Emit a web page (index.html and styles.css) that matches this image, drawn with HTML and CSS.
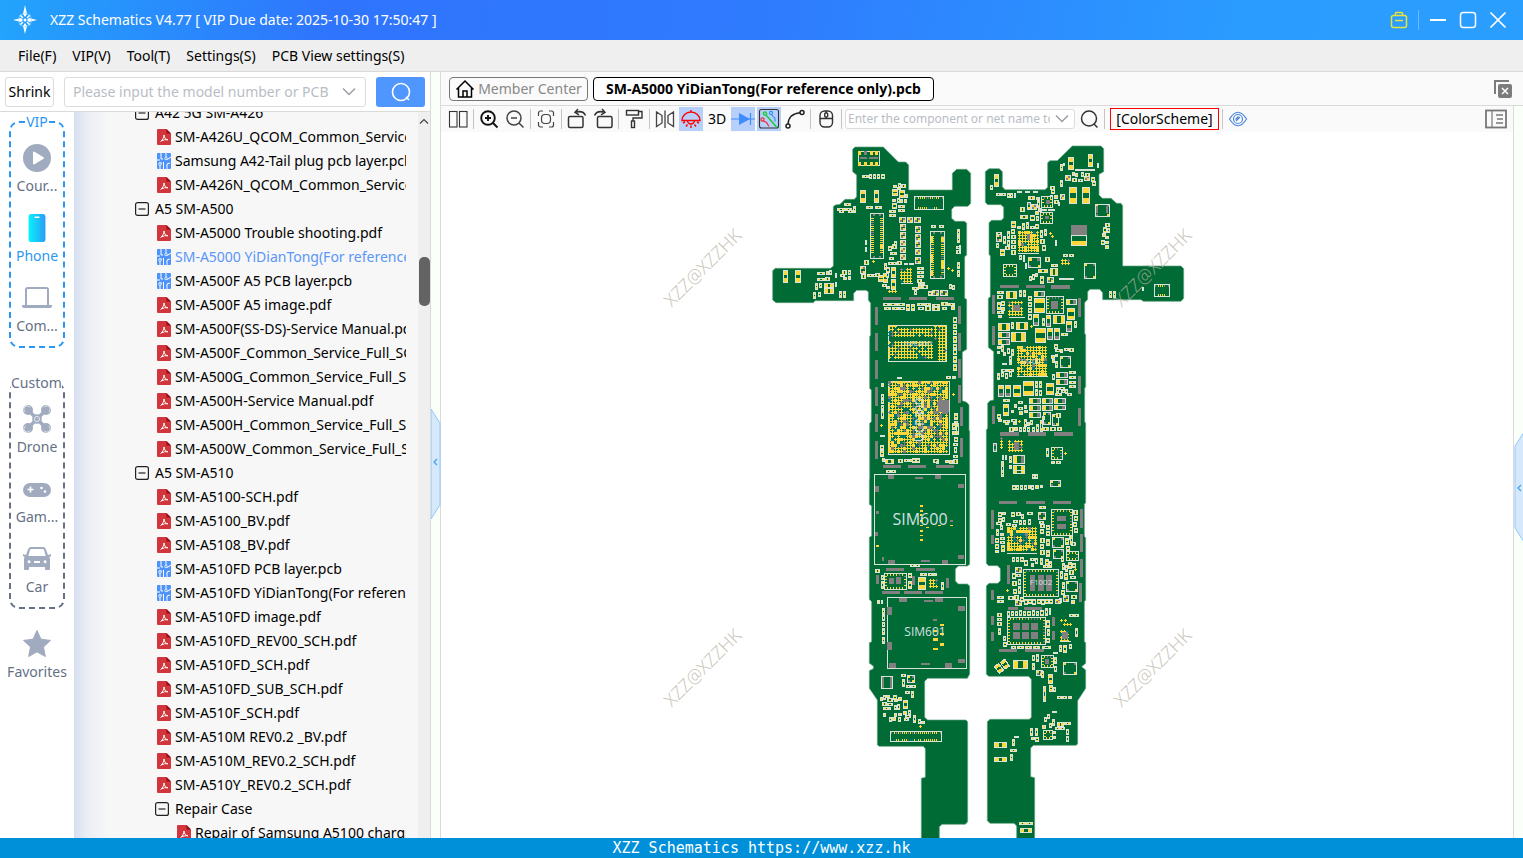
FILE: index.html
```html
<!DOCTYPE html>
<html lang="en">
<head>
<meta charset="utf-8">
<title>XZZ Schematics</title>
<link rel="stylesheet" href="styles.css">
</head>
<body>
<div class="app">
  <header class="titlebar">
    <svg class="logo" width="26" height="30" viewBox="0 0 26 30"><path d="M13 0l2 9-2 3-2-3zM13 29l2-8-2-3-2 3zM1 15l8-2 2 2-2 2zM25 15l-8-2-2 2 2 2z" fill="#fff"/><path d="M8 10l3 3M18 10l-3 3M8 20l3-3M18 20l-3-3" stroke="#fff" stroke-width="1.5"/><circle cx="13" cy="15" r="6.500" fill="none" stroke="#9cdcff" stroke-width="1" opacity=".7"/><circle cx="13" cy="15" r="1.500" fill="#fff"/></svg>
    <h1 class="title">XZZ Schematics V4.77 [ VIP Due date: 2025-10-30 17:50:47 ]</h1>
    <div class="window-controls">
      <button class="wc" aria-label="Toolbox"><svg width="18" height="18" viewBox="0 0 18 18" fill="none" stroke="#e8e337" stroke-width="1.500"><rect x="1.500" y="4.500" width="15" height="12" rx="2"/><path d="M5.500 4.500v-2a1 1 0 0 1 1-1h5a1 1 0 0 1 1 1v2M5 9.500h8"/></svg></button>
      <span class="wc-sep"></span>
      <button class="wc" aria-label="Minimize"><svg width="18" height="18" viewBox="0 0 18 18"><path d="M1 9h16" stroke="#fff" stroke-width="2"/></svg></button>
      <button class="wc" aria-label="Maximize"><svg width="18" height="18" viewBox="0 0 18 18"><rect x="1.500" y="1.500" width="15" height="15" rx="3" fill="none" stroke="#fff" stroke-width="1.500"/></svg></button>
      <button class="wc" aria-label="Close"><svg width="18" height="18" viewBox="0 0 18 18"><path d="M1.500 1.500l15 15M16.500 1.500l-15 15" stroke="#fff" stroke-width="1.700"/></svg></button>
    </div>
  </header>
  <nav class="menubar">
    <button>File(F)</button><button>VIP(V)</button><button>Tool(T)</button><button>Settings(S)</button><button>PCB View settings(S)</button>
  </nav>
  <main class="main">
    <section class="left">
      <form class="search-row">
        <button type="button" class="shrink">Shrink</button>
        <div class="combo">
          <input type="text" aria-label="Model number" placeholder="Please input the model number or PCB">
          <button type="button" class="chev" aria-label="Show history"><svg width="14" height="10" viewBox="0 0 14 10"><path d="M1 1.500l6 6 6-6" fill="none" stroke="#9a9da4" stroke-width="1.500"/></svg></button>
        </div>
        <button type="button" class="go" aria-label="Search"><svg width="22" height="22" viewBox="0 0 22 22" fill="none" stroke="#fff" stroke-width="1.600"><circle cx="11" cy="11" r="8.500"/><path d="M16 16l3 3"/></svg></button>
      </form>
      <div class="left-body">
        <aside class="side">
          <fieldset class="group vip">
            <legend>VIP</legend>
            <button class="cat"><svg width="30" height="30" viewBox="0 0 30 30"><circle cx="15" cy="15" r="14" fill="#a1abbf"/><path d="M11 9.500v11a1 1 0 0 0 1.500.8l9-5.500a1 1 0 0 0 0-1.600l-9-5.500a1 1 0 0 0-1.500.8z" fill="#fff"/></svg><span>Cour...</span></button>
            <button class="cat on"><svg width="30" height="32" viewBox="0 0 30 32"><defs><linearGradient id="ph"><stop offset="0" stop-color="#08f2fa"/><stop offset="1" stop-color="#2b9cf6"/></linearGradient></defs><rect x="6" y="1" width="18" height="30" rx="3" fill="url(#ph)"/><path d="M13 4.500h4" stroke="#fff" stroke-width="1.600" stroke-linecap="round"/></svg><span>Phone</span></button>
            <button class="cat"><svg width="30" height="30" viewBox="0 0 30 30"><path d="M4 22V6.500A1.500 1.500 0 0 1 5.500 5h19A1.500 1.500 0 0 1 26 6.500V22" fill="none" stroke="#a1abbf" stroke-width="2"/><path d="M0 22h30v1a2 2 0 0 1-2 2H2a2 2 0 0 1-2-2z" fill="#a1abbf"/></svg><span>Com...</span></button>
          </fieldset>
          <fieldset class="group custom">
            <legend>Custom</legend>
            <button class="cat"><svg width="30" height="30" viewBox="0 0 30 30"><path d="M6 6l18 18M24 6L6 24" stroke="#a1abbf" stroke-width="3.500"/><g fill="#a1abbf"><circle cx="6" cy="6" r="5"/><circle cx="24" cy="6" r="5"/><circle cx="6" cy="24" r="5"/><circle cx="24" cy="24" r="5"/><circle cx="15" cy="15" r="4.800"/></g><g fill="none" stroke="#eef0f4" stroke-width=".9"><path d="M3.500 8A3.300 3.300 0 1 1 8 3.500M22 3.500A3.300 3.300 0 1 1 26.500 8M3.500 22A3.300 3.300 0 1 0 8 26.500M22 26.500A3.300 3.300 0 1 0 26.500 22"/><circle cx="15" cy="15" r="2.500"/></g></svg><span>Drone</span></button>
            <button class="cat"><svg width="30" height="30" viewBox="0 0 30 30"><rect x="1" y="9" width="28" height="14" rx="7" fill="#a1abbf"/><path d="M5.500 15.500h6M8.500 12.500v6" stroke="#fff" stroke-width="1.600"/><circle cx="19.500" cy="14" r="1.300" fill="#fff"/><circle cx="23" cy="17.500" r="1.300" fill="#fff"/></svg><span>Gam...</span></button>
            <button class="cat"><svg width="30" height="30" viewBox="0 0 30 30"><path fill-rule="evenodd" fill="#a1abbf" d="M9 3h12a3 3 0 0 1 2.800 2L26 11l3-1v2l-1.500 1 .5 2v10a1 1 0 0 1-1 1h-3a1 1 0 0 1-1-1v-2H7v2a1 1 0 0 1-1 1H3a1 1 0 0 1-1-1V15l.5-2L1 12v-2l3 1 2.200-6A3 3 0 0 1 9 3zm0 2a1 1 0 0 0-1 .7L6.300 12h17.400L22 5.700A1 1 0 0 0 21 5zM7 16.300a1.500 1.500 0 1 0 .1 3 1.500 1.500 0 0 0-.1-3zm16 0a1.500 1.500 0 1 0 .1 3 1.500 1.500 0 0 0-.1-3zM12 17v2h6v-2z"/></svg><span>Car</span></button>
          </fieldset>
          <button class="cat fav"><svg width="30" height="30" viewBox="0 0 30 30"><path d="M15 1.500l4 8.700 9.500 1.200-7 6.500 1.800 9.600-8.300-4.700-8.300 4.700 1.800-9.600-7-6.500 9.500-1.200z" fill="#a1abbf" stroke="#a1abbf" stroke-width="1" stroke-linejoin="round"/></svg><span>Favorites</span></button>
        </aside>
        <div class="tree-pane"><ul class="tree" id="tree"></ul></div>
        <div class="scrollbar"><svg width="10" height="6" viewBox="0 0 10 6"><path d="M1 5.500l4-4 4 4" fill="none" stroke="#444" stroke-width="1.200"/></svg><span class="thumb"></span></div>
      </div>
    </section>
    <div class="splitter"><svg width="10" height="112" viewBox="0 0 10 112"><path d="M0 1l9 14v82l-9 14z" fill="#d6e9fc" stroke="#93c8f6"/><path d="M6 51l-3 3 3 3" fill="none" stroke="#45a5ea" stroke-width="1.300"/></svg></div>
    <section class="right">
      <div class="tabs">
        <button class="tab home"><svg width="20" height="20" viewBox="0 0 20 20" fill="none" stroke="#000" stroke-width="1.500"><path d="M1.500 10.500L10 2l8.500 8.500M3.500 9v9h13V9M8 18v-6h4v6"/></svg><span>Member Center</span></button>
        <button class="tab current">SM-A5000 YiDianTong(For reference only).pcb</button>
        <button class="plain close-all" aria-label="Close all"><svg width="20" height="20" viewBox="0 0 20 20"><path d="M2 15V2h14" fill="none" stroke="#7c7c7c" stroke-width="2"/><rect x="5" y="5" width="14" height="14" rx="2" fill="#7c7c7c"/><path d="M9 9l6 6M15 9l-6 6" stroke="#fff" stroke-width="1.500"/></svg></button>
      </div>
      <div class="view">
        <div class="view-main">
          <div class="toolbar" role="toolbar">
            <button class="tb" aria-label="Split"><svg width="22" height="22" viewBox="0 0 22 22" fill="none" stroke="#333" stroke-width="1.100"><rect x="2.500" y="3.500" width="7.500" height="15.500"/><rect x="12.500" y="3.500" width="7.500" height="15.500"/></svg></button>
            <i class="sep"></i>
            <button class="tb" aria-label="Zoom in"><svg width="22" height="22" viewBox="0 0 22 22" fill="none" stroke="#111" stroke-width="1.900"><circle cx="10" cy="10" r="6.800"/><path d="M15 15l4.500 4.500M7 10h6M10 7v6"/></svg></button>
            <button class="tb" aria-label="Zoom out"><svg width="22" height="22" viewBox="0 0 22 22" fill="none" stroke="#444" stroke-width="1.500"><circle cx="10" cy="10" r="7"/><path d="M15 15l4.500 4.500M7 10h6"/></svg></button>
            <i class="sep"></i>
            <button class="tb" aria-label="Fit"><svg width="22" height="22" viewBox="0 0 22 22" fill="none" stroke="#444" stroke-width="1.200"><path d="M3.500 8V5a2 2 0 0 1 2-2H8M14 3h2.500a2 2 0 0 1 2 2v3M18.500 14v3a2 2 0 0 1-2 2H14M8 19H5.500a2 2 0 0 1-2-2v-3"/><rect x="6.500" y="6.500" width="9" height="9" rx="3.500"/></svg></button>
            <i class="sep"></i>
            <button class="tb" aria-label="Rotate left"><svg width="22" height="22" viewBox="0 0 22 22" fill="none" stroke="#333" stroke-width="1.500"><rect x="2.500" y="8.500" width="14.500" height="11" rx="1.500"/><path d="M19.500 7.500C18 4 14 3 9.500 4.200M12 1L9 4.300l4 2.500"/></svg></button>
            <button class="tb" aria-label="Rotate right"><svg width="22" height="22" viewBox="0 0 22 22" fill="none" stroke="#333" stroke-width="1.500"><rect x="5.500" y="8.500" width="14.500" height="11" rx="1.500"/><path d="M2.500 7.500C4 4 8 3 12.500 4.200M10 1l3 3.300-4 2.500"/></svg></button>
            <i class="sep"></i>
            <button class="tb" aria-label="Paint"><svg width="22" height="22" viewBox="0 0 22 22" fill="none" stroke="#333" stroke-width="1.400"><rect x="3.500" y="2.500" width="12" height="4.500"/><path d="M15.500 3.500H19V10h-9v3"/><rect x="8.500" y="13" width="3" height="6.500"/></svg></button>
            <i class="sep"></i>
            <button class="tb" aria-label="Mirror"><svg width="22" height="22" viewBox="0 0 22 22" fill="none" stroke="#444" stroke-width="1.300"><path d="M2.500 4v14.500L8 15V7.500zM19.500 4v14.500L14 15V7.500zM11 2.500V20"/></svg></button>
            <button class="tb hl" aria-label="Lamp"><svg width="22" height="22" viewBox="0 0 22 22" fill="none" stroke="#f00" stroke-width="1.400"><path d="M2 12.500a9 8.500 0 0 1 18 0zM11 4V2M7.500 12.500a3.500 3.500 0 0 0 7 0M3 15l2-1M19 15l-2-1M6 18.500l1.500-2M16 18.500l-1.500-2M11 20v-2.500"/></svg></button>
            <button class="tb">3D</button>
            <button class="tb hl" aria-label="Diode"><svg width="24" height="22" viewBox="0 0 24 22"><path d="M0 11h24M19.500 5v12" stroke="#3f8cff" stroke-width="1.200"/><path d="M8 5l11 6-11 6z" fill="#3f8cff"/></svg></button>
            <button class="tb hl" aria-label="Traces"><svg width="22" height="22" viewBox="0 0 22 22" fill="none" stroke-width="1.400"><rect x="1.500" y="1.500" width="19" height="18.500" rx="2" stroke="#333" stroke-width="1.100"/><path d="M8 7l11 12.500" stroke="#19c832"/><circle cx="7" cy="5.500" r="1.600" stroke="#19c832"/><path d="M13.500 6.500l3.500 4v3" stroke="#2a8cf4" stroke-width="1.100"/><circle cx="13" cy="5" r="1.600" stroke="#2a8cf4" stroke-width="1.100"/><path d="M5.500 13l3 1.500 2.500 4" stroke="#f02b2b" stroke-width="1.200"/><circle cx="4.500" cy="11.500" r="1.600" stroke="#f02b2b" stroke-width="1.200"/></svg></button>
            <button class="tb" aria-label="Curve"><svg width="22" height="22" viewBox="0 0 22 22" fill="none" stroke="#222" stroke-width="1.500"><circle cx="4" cy="18" r="2"/><circle cx="18" cy="4.500" r="2"/><path d="M4 16C4.500 9 9 5.500 16 4.800"/></svg></button>
            <i class="sep"></i>
            <button class="tb" aria-label="Mouse"><svg width="22" height="22" viewBox="0 0 22 22" fill="none" stroke="#333" stroke-width="1.400"><rect x="5" y="3" width="12.500" height="16" rx="4.500"/><path d="M5 10.500h12.500M11.200 3v2M11.200 9v1.500"/><rect x="9.700" y="5" width="3" height="4" rx="1"/></svg></button>
            <i class="sep"></i>
            <div class="combo small">
              <input type="text" aria-label="Component or net name" placeholder="Enter the component or net name to">
              <button type="button" class="chev" aria-label="Show history"><svg width="14" height="10" viewBox="0 0 14 10"><path d="M1 1.500l6 6 6-6" fill="none" stroke="#9a9da4" stroke-width="1.500"/></svg></button>
            </div>
            <button class="tb" aria-label="Find"><svg width="22" height="22" viewBox="0 0 22 22" fill="none" stroke="#333" stroke-width="1.500"><circle cx="11" cy="10.500" r="7.500"/><path d="M16 16l3.500 3.500"/></svg></button>
            <i class="sep"></i>
            <button class="scheme">[ColorScheme]</button>
            <i class="sep"></i>
            <button class="tb" aria-label="Visibility"><svg width="22" height="22" viewBox="0 0 22 22" fill="none" stroke="#4a86dd" stroke-width="1.200"><path d="M2.500 11Q11-2.500 19.500 11 11 24.500 2.500 11z"/><circle cx="11" cy="11" r="4.500"/><path d="M9 13l4-4M8.500 11.500l3-3"/></svg></button>
            <button class="plain panel-toggle" aria-label="Panel"><svg width="22" height="20" viewBox="0 0 22 20" fill="none" stroke="#777"><rect x="1" y="1.500" width="20" height="17" stroke-width="1.800"/><path d="M7 1v18" stroke-width="1.200"/><path d="M11 6h7M12 10h6M11 14h7" stroke-width="1.500"/></svg></button>
          </div>
          <div class="canvas"><svg id="board" viewBox="441 132 1072 706" preserveAspectRatio="xMidYMin meet"></svg></div>
        </div>
        <div class="edge"><svg width="10" height="112" viewBox="0 0 10 112"><path d="M10 1L1 15v82l9 14z" fill="#d6e9fc" stroke="#93c8f6"/><path d="M7 54l-3 3 3 3" fill="none" stroke="#45a5ea" stroke-width="1.300"/></svg></div>
      </div>
    </section>
  </main>
  <footer class="status">XZZ Schematics https://www.xzz.hk</footer>
</div>
<script src="app.js"></script>
</body>
</html>
```
FILE: styles.css
```css
* { box-sizing: border-box; }
body { margin: 0; font-family: "Noto Sans", "Open Sans", sans-serif; font-size: 14px; line-height: 20px; color: #000; }
button, input { font: inherit; color: inherit; margin: 0; padding: 0; border: 0; background: none; }
button { cursor: pointer; white-space: nowrap; }
svg { display: block; }
.app { display: flex; flex-direction: column; height: 100vh; overflow: hidden; background: #fff; }

.titlebar { flex: none; height: 40px; display: flex; align-items: center; padding: 0 16px 0 12px; background: linear-gradient(100deg, #22a4fc 0, #2f74fd 22%, #2f7bfe 50%, #2a9cff 82%, #2a9eff 100%); color: #fff; }
.title { margin: 0 auto 0 12px; font-size: 14px; font-weight: 400; }
.window-controls { display: flex; align-items: center; gap: 12px; }
.wc-sep { width: 1px; height: 20px; margin: 0 -2px; background: #6fbaff; }

.menubar { flex: none; height: 32px; display: flex; align-items: center; gap: 16px; padding: 1px 18px 0; background: #efefef; border-bottom: 1px solid #d9d9d9; }

.main { flex: 1; min-height: 0; display: flex; }
.left { flex: none; width: 431px; display: flex; flex-direction: column; border-right: 1px solid #dadada; }
.search-row { flex: none; height: 40px; display: flex; align-items: center; padding: 0 5px; gap: 10px; border-bottom: 1px solid #dadada; }
.shrink { width: 49px; height: 30px; border: 1px solid #dcdcdc; border-radius: 3px; }
.combo { flex: 1; height: 30px; display: flex; align-items: center; border: 1px solid #dcdcdc; border-radius: 3px; background: #fff; }
.combo input { flex: 1; min-width: 0; padding-left: 8px; outline: 0; }
.combo input::placeholder { color: #b9bdc6; opacity: 1; }
.chev { flex: none; width: 28px; height: 20px; display: flex; align-items: center; justify-content: center; padding-right: 4px; }
.go { width: 49px; height: 30px; border-radius: 3px; background: #5096ff; display: flex; align-items: center; justify-content: center; }

.left-body { flex: 1; min-height: 0; display: flex; }
.side { flex: none; width: 74px; color: #667085; }
.group { width: 56px; min-width: 0; margin: 0 0 0 9px; padding: 2px 0; border: 2px dashed #667085; border-radius: 10px; display: flex; flex-direction: column; align-items: center; }
.group legend { margin: 0 auto; padding: 0; line-height: 20px; }
.custom legend { margin-left: 0; }
.vip { border-color: #2b97f4; }
.vip legend, .cat.on { color: #2b97f4; }
.custom { margin-top: 25px; }
.cat { width: 100%; height: 70px; display: flex; flex-direction: column; align-items: center; justify-content: center; gap: 3px; }
.cat svg { height: 30px; }
.fav { margin-top: 11px; }

.tree-pane { flex: 1; min-width: 0; overflow: hidden; padding-right: 12px; background: linear-gradient(90deg, #d6e0f1 0, #e9edf4 12px, #f7f7f7 34px); }
.tree { list-style: none; margin: -11px 0 0; padding: 0 0 0 61px; overflow: hidden; }
.tree li { display: flex; align-items: center; gap: 4px; height: 24px; white-space: nowrap; }
.tree li svg { flex: none; }
.tree .branch { gap: 6px; }
.tree .leaf { padding-left: 22px; }
.tree .sub { padding-left: 20px; }
.tree .deep { padding-left: 42px; }
.tree .active { color: #5a96f8; }
.scrollbar { flex: none; width: 12px; background: #efefef; display: flex; flex-direction: column; align-items: center; padding-top: 6px; }
.thumb { width: 11px; height: 49px; margin-top: 133px; border-radius: 5px; background: #636363; }

.splitter { flex: none; width: 10px; background: #fafffa; border-right: 1px solid #dadada; }
.splitter svg { margin-top: 336px; }

.right { flex: 1; min-width: 0; display: flex; flex-direction: column; }
.tabs { flex: none; height: 34px; display: flex; align-items: center; gap: 5px; padding: 0 10px 0 8px; background: #fafafa; border-bottom: 1px solid #dadada; }
.tab { height: 24px; border: 1px solid #777; border-radius: 4px; display: flex; align-items: center; justify-content: center; }
.home { width: 139px; gap: 3px; color: #888; }
.current { padding: 0 12px; border-color: #000; background: #fff; font-weight: 700; }
.close-all { margin-left: auto; }
.view { flex: 1; min-height: 0; display: flex; }
.view-main { flex: 1; min-width: 0; display: flex; flex-direction: column; }
.toolbar { flex: none; height: 26px; display: flex; align-items: center; gap: 2px; padding: 0 6px 0 5px; background: #fafafa; }
.tb { flex: none; width: 24px; height: 24px; display: flex; align-items: center; justify-content: center; }
.hl { background: #b7d0fb; }
.sep { flex: none; width: 1px; height: 20px; margin: 0 1px; background: #c4c4c4; }
.small { flex: none; width: 230px; height: 20px; font-size: 12px; }
.small input { padding-left: 2px; height: 18px; }
.small .chev { width: 24px; height: 18px; padding: 0; }
.scheme { height: 22px; width: 109px; margin-left: 2px; border: 1px solid #f00; line-height: 20px; }
.panel-toggle { margin-left: auto; }
.canvas { flex: 1; min-height: 0; overflow: hidden; background: #fff; }
.canvas svg { width: 100%; height: 100%; }
.edge { flex: none; width: 10px; border-left: 1px solid #dadada; background: #fafffa; }
.edge svg { margin-top: 325px; }

.mark { font-family: "Open Sans", sans-serif; font-size: 18px; fill: #b9b4a4; opacity: .8; text-anchor: middle; font-weight: 300; }
.ref { font-family: "Open Sans", sans-serif; fill: #d5e0e2; text-anchor: middle; }
.ref-16 { font-size: 16px; }
.ref-12 { font-size: 12px; }
.ref-8 { font-size: 8px; }

.status { flex: none; height: 20px; background: #0090d9; color: #fff; text-align: center; font-family: "DejaVu Sans Mono", monospace; font-size: 15px; }
```
FILE: app.js
```js
// File tree
const pdfIcon = '<svg width="14" height="16" viewBox="0 0 14 16"><path d="M1 0h8.500L14 4.500V15a1 1 0 0 1-1 1H1a1 1 0 0 1-1-1V1a1 1 0 0 1 1-1z" fill="#d3353d"/><path d="M9.500 0v4.500H14z" fill="#8f1219"/><path d="M3.500 12.500c2-1.500 3.500-4 3.500-6.500 0 3 2 4.500 4 4.800-2.500-.3-4.500 0-6.500 1.200" fill="none" stroke="#fff" stroke-width="1"/></svg>';
const pcbIcon = '<svg width="14" height="16" viewBox="0 0 14 16"><rect width="14" height="16" rx="1" fill="#4e92fb"/><path d="M4 0v6h2M9 0v4M0 7h3M8 6h3l3-2M6.500 9v7M10 16v-5l3-1M3 12v4M5 10H2" fill="none" stroke="#fff" stroke-width="1"/><circle cx="9" cy="5.500" r="1.300" fill="#4e92fb" stroke="#fff" stroke-width=".8"/><circle cx="3" cy="11" r="1.300" fill="#4e92fb" stroke="#fff" stroke-width=".8"/></svg>';
const minusIcon = '<svg width="14" height="14" viewBox="0 0 14 14"><rect x=".6" y=".6" width="12.800" height="12.800" rx="2" fill="none" stroke="#222" stroke-width="1.200"/><path d="M3.500 7h7" stroke="#222" stroke-width="1.200"/></svg>';
const files = [
  ['branch', 'A42 5G SM-A426'],
  ['leaf', 'SM-A426U_QCOM_Common_Service.pdf'],
  ['leaf', 'Samsung A42-Tail plug pcb layer.pcb'],
  ['leaf', 'SM-A426N_QCOM_Common_Service.pdf'],
  ['branch', 'A5 SM-A500'],
  ['leaf', 'SM-A5000 Trouble shooting.pdf'],
  ['leaf active', 'SM-A5000 YiDianTong(For reference only).pcb'],
  ['leaf', 'SM-A500F A5 PCB layer.pcb'],
  ['leaf', 'SM-A500F A5 image.pdf'],
  ['leaf', 'SM-A500F(SS-DS)-Service Manual.pdf'],
  ['leaf', 'SM-A500F_Common_Service_Full_SCH.pdf'],
  ['leaf', 'SM-A500G_Common_Service_Full_SCH.pdf'],
  ['leaf', 'SM-A500H-Service Manual.pdf'],
  ['leaf', 'SM-A500H_Common_Service_Full_SCH.pdf'],
  ['leaf', 'SM-A500W_Common_Service_Full_SCH.pdf'],
  ['branch', 'A5 SM-A510'],
  ['leaf', 'SM-A5100-SCH.pdf'],
  ['leaf', 'SM-A5100_BV.pdf'],
  ['leaf', 'SM-A5108_BV.pdf'],
  ['leaf', 'SM-A510FD PCB layer.pcb'],
  ['leaf', 'SM-A510FD YiDianTong(For reference only).pcb'],
  ['leaf', 'SM-A510FD image.pdf'],
  ['leaf', 'SM-A510FD_REV00_SCH.pdf'],
  ['leaf', 'SM-A510FD_SCH.pdf'],
  ['leaf', 'SM-A510FD_SUB_SCH.pdf'],
  ['leaf', 'SM-A510F_SCH.pdf'],
  ['leaf', 'SM-A510M REV0.2 _BV.pdf'],
  ['leaf', 'SM-A510M_REV0.2_SCH.pdf'],
  ['leaf', 'SM-A510Y_REV0.2_SCH.pdf'],
  ['branch sub', 'Repair Case'],
  ['leaf deep', 'Repair of Samsung A5100 charging.pdf']
];
document.getElementById('tree').innerHTML = files.map(([kind, name]) => {
  const icon = kind.startsWith('branch') ? minusIcon : name.endsWith('.pcb') ? pcbIcon : pdfIcon;
  return `<li class="${kind}">${icon}<span>${name}</span></li>`;
}).join('');

// Board drawing: each sheet uses units of a third of a pixel
const GREEN = '#006b35', YELLOW = '#fed83b', GRAY = '#827f80', TEAL = '#00797a', WHITE = '#d9e3dc';
const box = (x, y, w, h, f) => `<rect x="${x}" y="${y}" width="${w}" height="${h}" fill="${f}"/>`;
const frame = (x, y, w, h) => box(x, y, w, h, WHITE) + box(x + 3, y + 3, w - 6, h - 6, GREEN);
let seed = 7;
const rnd = () => (seed = (seed * 1103515245 + 12345) % 2147483648) / 2147483648;

function ends(x, y, w, h, a, b) {
  return w >= h ? box(x, y, Math.max(3, w * .34), h, a) + box(x + w - Math.max(3, w * .34), y, Math.max(3, w * .34), h, b)
                : box(x, y, w, Math.max(3, h * .34), a) + box(x, y + h - Math.max(3, h * .34), w, Math.max(3, h * .34), b);
}
const draw = {
  // small two-pad part
  t: (x, y, w, h) => frame(x, y, w, h) + ends(x + 3, y + 3, w - 6, h - 6, YELLOW, YELLOW),
  // two-pad part with one ground pad
  m: (x, y, w, h) => frame(x, y, w, h) + ends(x + 3, y + 3, w - 6, h - 6, YELLOW, GRAY),
  n: (x, y, w, h) => frame(x, y, w, h) + ends(x + 3, y + 3, w - 6, h - 6, GRAY, GRAY),
  g: (x, y, w, h) => box(x, y, w, h, GRAY),
  y: (x, y, w, h) => box(x, y, w, h, YELLOW),
  o: (x, y, w, h) => frame(x, y, w, h),
  // transistor: four corner pads
  c: (x, y, w, h) => frame(x, y, w, h) + box(x + 3, y + 3, 6, 6, YELLOW) + box(x + w - 9, y + 3, 6, 6, GRAY) + box(x + 3, y + h - 9, 6, 6, GRAY) + box(x + w - 9, y + h - 9, 6, 6, YELLOW),
  p: (x, y) => box(x, y + 3, 9, 3, YELLOW) + box(x + 3, y, 3, 9, YELLOW),
  // ball grid; d is the share of filled cells
  b: (x, y, w, h, d = 0) => {
    let s = '';
    for (let j = 0; j + 9 <= h; j += 9) for (let i = 0; i + 9 <= w; i += 9) {
      const r = rnd(), ring = i < 18 || j < 18 || i > w - 28 || j > h - 28;
      const f = r < (ring ? .08 : .24) ? GRAY : r < (ring ? .14 : .36) ? TEAL : YELLOW;
      s += box(x + i, y + j + 3, 9, 3, f) + box(x + i + 3, y + j, 3, 9, f);
      if (rnd() < d) s += box(x + i, y + j, 9, 9, f);
    }
    return s;
  },
  // pads on all four sides
  q: (x, y, w, h) => {
    let s = frame(x, y, w, h);
    for (let i = 9; i < w - 9; i += 9) s += box(x + i, y + 3, 3, 6, rnd() < .4 ? GRAY : YELLOW) + box(x + i, y + h - 9, 3, 6, YELLOW);
    for (let j = 9; j < h - 9; j += 9) s += box(x + 3, y + j, 6, 3, YELLOW) + box(x + w - 9, y + j, 6, 3, rnd() < .4 ? GRAY : YELLOW);
    return s;
  },
  // tall connector
  k: (x, y, w, h) => {
    let s = frame(x, y, w, h);
    for (let j = 15; j < h - 15; j += 6) s += box(x + 3, y + j, 9, 3, rnd() < .2 ? GRAY : YELLOW) + box(x + w - 12, y + j, 9, 3, rnd() < .2 ? GRAY : YELLOW);
    return s + box(x + 9, y + 3, 6, 6, GRAY) + box(x + w - 15, y + 3, 6, 6, GRAY) + box(x + 9, y + h - 9, 6, 6, GRAY) + box(x + w - 15, y + h - 9, 6, 6, GRAY);
  },
  // wide connector
  j: (x, y, w, h) => {
    let s = frame(x, y, w, h);
    for (let i = 12; i < w - 12; i += 6) s += box(x + i, y + 3, 3, 6, rnd() < .25 ? GRAY : YELLOW) + box(x + i, y + h - 9, 3, 6, rnd() < .2 ? TEAL : YELLOW);
    return s + box(x + 3, y + 3, 3, 6, GRAY) + box(x + w - 6, y + 3, 3, 6, GRAY);
  }
};

const outlines = {
  a: ['M629 1020V875L627 870V795L620 787 607 782V636L620 628V478L614 475V350L620 345V250L614 244H585L575 235V208L584 199H624L632 190V100L620 88H590L577 100V150H446V75L437 66H415L370 21H285L278 28V95L290 105V170L283 178H255L240 193 226 195 220 200V378L212 385H46L38 392V480L48 488H160L165 482H281V460L290 451H318L325 455V480L332 490V585L329 590V745L334 750V845L329 850V1020'],
  b: ['M34 1020V870L38 865V790L45 782 56 780V635L40 622V475L46 470V348L42 343V248L50 241H79L86 234V202L78 194H38L31 187V95L42 86H73L82 95V140L90 149H210L218 142V68L225 62H247L292 18H378L386 26V95L372 103V165L382 175H408L425 190H438L443 197V378H618L626 386V475L618 484H505L498 479H383V458L374 448H345L338 455V478L329 488V580L332 585V740L329 745V845L332 850V1020'],
  c: ['M329 29V283L322 288H295L286 297V333L295 342H322L329 348V612L322 625H203L194 634V742L203 750H318L323 756V1055L316 1063H246L238 1070V1107H184V925L196 922V836L190 829H58L52 825V690L28 655V602L40 596V588L28 580V518L35 515V395L28 388V202L35 198V108L28 103V29',
      'M677 29V98L673 103V198L677 205V390L673 395V515L677 518V580L665 590 677 600V655L653 692V822L648 826H520L512 834V920L524 923V1107H470V1068L462 1060H390L382 1052V755L390 748H508L514 742V628L506 619H386L379 612V348L387 340H414L421 332V296L413 287H386L379 280V29']
};

const parts = {
a: `o 295 34 64 45;y 294 34 9 12;g 312 34 9 12;y 330 34 9 12;y 345 34 9 12;g 300 51 20 6;g 327 51 27 6;y 294 66 9 12;y 312 66 9 12;y 330 66 9 12;y 345 66 9 12;
t 306 105 20 9;t 327 102 9 15;t 339 102 9 15;t 351 102 9 15;t 363 102 12 15;t 300 149 18 39;t 342 149 15 39;t 318 198 21 9;t 345 198 21 9;t 252 189 21 9;t 231 204 24 9;t 255 204 21 9;t 237 210 15 9;t 264 210 15 9;t 279 198 9 21;
t 399 135 12 9;t 414 129 9 15;t 423 132 15 12;t 396 147 18 21;t 417 150 18 24;t 411 141 12 9;t 435 162 9 12;t 396 177 12 9;t 411 174 9 15;t 421 177 9 12;t 432 177 9 12;t 396 189 15 18;t 414 195 21 9;t 414 207 21 9;t 387 210 21 9;t 387 222 21 9;
j 463 169 88 40;k 330 220 42 136;k 510 273 44 145;y 513 290 6 15;y 543 290 9 15;y 513 345 6 21;y 543 360 9 24;y 513 390 6 18;y 360 315 9 12;
c 418 232 20 16;c 442 232 18 16;c 463 232 20 16;c 420 253 18 20;c 420 276 18 20;c 420 300 18 18;c 420 321 18 18;c 420 343 18 18;c 466 258 17 20;c 466 282 17 20;c 466 304 17 20;c 466 328 17 18;c 466 351 17 20;
t 513 255 15 9;t 537 255 15 9;t 591 267 9 21;t 591 288 9 21;t 588 318 15 9;t 588 330 15 12;t 597 315 6 27;t 591 366 9 21;t 591 390 9 21;p 561 381;p 573 387;p 336 360;
t 384 318 12 15;t 396 312 15 15;t 402 303 9 15;t 390 336 21 9;t 387 351 15 9;t 384 366 15 9;t 396 366 15 9;t 411 363 15 12;t 315 300 6 15;t 315 321 6 15;t 312 360 15 15;
c 300 378 18 24;t 303 402 15 15;t 321 402 21 9;t 336 402 15 9;t 372 369 9 21;t 378 381 12 18;t 354 405 18 21;t 369 399 15 30;t 345 399 15 12;t 378 396 9 18;t 366 432 15 9;t 378 437 12 9;t 393 381 15 33;t 393 417 15 33;b 384 450 27 9;
b 421 384 36 45;o 424 429 36 3;t 432 369 12 6;t 447 369 15 6;t 471 381 21 9;t 471 393 21 9;t 471 405 21 9;t 471 417 15 12;t 474 429 9 15;t 484 426 12 9;t 456 441 21 9;t 462 450 9 15;t 474 435 12 12;t 486 435 18 12;t 504 453 12 15;c 516 450 21 18;c 540 450 24 18;t 567 432 9 15;t 576 435 9 15;
t 69 391 15 38;t 106 391 17 38;t 171 396 24 9;t 198 393 9 12;t 207 390 9 15;t 171 414 24 9;t 195 411 15 12;t 165 429 9 21;t 177 429 9 15;t 192 429 30 15;t 192 445 30 16;t 225 399 6 15;t 225 426 6 15;t 240 402 15 9;t 246 390 15 15;t 264 390 9 15;t 249 411 12 9;t 264 408 9 12;t 159 456 9 21;t 174 456 9 15;t 237 453 9 21;t 249 453 9 21;
g 369 471 54 9;g 447 471 54 9;g 528 471 54 9;g 345 501 9 54;g 345 579 9 54;g 345 660 9 57;g 345 741 9 57;g 345 822 9 54;g 345 903 9 54;g 594 498 9 54;g 594 579 9 54;g 594 657 9 57;g 594 735 9 54;g 600 801 9 57;g 600 894 9 57;g 369 975 54 9;g 444 975 54 9;g 528 975 54 9;
t 369 489 18 9;t 387 489 24 9;t 411 489 24 9;t 372 501 21 9;t 396 501 21 9;t 417 501 18 9;t 438 492 12 21;t 453 492 12 21;t 471 489 21 9;t 492 489 21 9;t 474 501 18 9;t 495 498 18 15;t 516 492 24 9;t 516 501 24 12;t 543 486 21 12;t 546 501 15 9;t 564 489 21 9;t 573 498 12 12;
t 579 531 12 18;t 579 552 12 15;t 579 570 12 15;t 579 588 12 21;t 579 612 12 15;t 579 627 12 18;t 579 648 12 21;t 579 672 12 21;t 558 708 15 9;t 576 708 12 9;t 411 711 15 6;t 363 729 9 12;t 363 762 9 15;t 363 777 9 15;t 363 795 9 15;t 363 810 9 27;t 360 885 15 6;p 576 759;p 360 852;
o 384 555 177 110;b 384 555 27 9;b 384 564 135 27;b 384 604 135 54;b 534 555 27 108;b 522 555 12 45;
o 384 723 186 222;b 384 723 186 222 .45;g 534 780 33 36;
t 582 819 12 21;t 582 843 12 15;t 576 849 12 21;t 588 849 9 36;t 576 873 12 12;t 582 891 12 15;t 579 909 15 9;t 582 921 9 18;t 579 945 15 9;t 579 957 15 15;
t 360 915 12 15;t 360 930 12 21;t 375 957 27 15;t 414 957 15 12;t 432 957 15 9;t 447 957 12 9;t 456 954 12 15;t 468 954 12 15;t 519 957 18 12;t 528 963 9 9;t 555 960 12 9;t 567 960 12 12;t 366 955 9 12;t 378 990 15 9;t 393 990 15 9`,
b: `t 57 102 14 38;t 45 135 9 15;t 63 159 15 9;t 78 159 15 9;t 96 159 9 15;t 105 159 9 15;t 117 159 6 15;t 126 153 15 6;t 150 153 15 6;t 174 153 15 6;
t 279 51 18 39;t 339 42 15 39;t 366 69 6 15;t 255 72 9 21;t 264 69 6 9;t 300 87 15 6;t 315 87 15 6;t 330 87 15 6;t 345 87 15 6;t 291 96 9 12;t 300 99 9 12;c 270 105 18 18;t 291 114 15 12;t 309 117 15 9;t 330 99 15 12;c 327 108 18 15;t 348 111 12 15;t 351 123 12 15;t 255 120 9 21;t 318 96 9 15;t 225 138 15 12;t 228 147 12 15;t 225 165 9 9;
t 282 141 24 50;t 321 141 24 50;c 361 192 43 38;g 363 198 6 21;g 393 198 6 21;c 255 162 15 18;q 197 168 37 36;g 212 180 12 12;q 196 216 38 36;g 210 228 12 9;t 237 165 12 12;t 237 180 15 12;t 249 186 6 12;
t 159 168 21 12;c 156 186 12 24;c 168 192 18 18;t 183 171 12 9;t 186 180 9 24;t 189 204 12 12;t 135 201 15 15;t 135 225 24 12;t 165 225 15 18;t 180 213 12 12;t 183 228 9 15;t 195 207 21 6;t 219 207 21 6;
t 108 243 15 21;t 141 249 9 21;t 153 246 9 21;t 126 258 12 9;t 165 258 15 9;t 180 252 12 15;t 63 276 18 9;c 63 282 18 24;t 63 309 9 15;t 75 327 15 21;t 84 288 9 24;t 96 273 9 24;t 96 300 9 18;t 108 267 12 15;t 108 285 15 12;t 108 300 15 12;t 108 315 15 12;t 108 330 15 15;t 90 318 15 12;b 129 274 63 63 .4;o 129 339 63 3;t 195 270 9 24;t 195 297 15 15;t 201 315 12 18;t 207 267 9 21;p 222 276;p 228 285;t 240 300 6 18;
g 288 255 48 63;o 288 285 48 33;y 291 303 42 12;t 390 249 15 12;t 384 261 12 18;t 396 264 9 15;t 381 279 12 12;t 390 288 12 9;t 378 300 12 15;t 390 303 12 9;t 390 315 12 12;
t 132 345 9 15;t 144 345 6 21;c 159 350 39 34;g 186 354 9 9;y 162 354 9 9;t 210 351 15 15;t 264 342 15 9;t 282 342 15 9;b 258 357 27 24;c 327 369 36 47;q 84 372 41 40;t 228 372 21 9;t 225 384 24 24;t 189 387 30 12;t 180 399 9 12;t 162 408 9 15;t 171 402 9 18;t 195 408 12 24;c 216 411 21 18;t 252 414 45 6;t 150 369 6 18;
j 537 432 47 38;t 501 441 6 12;t 402 453 9 21;t 414 453 9 21;
g 75 435 57 9;g 153 435 57 9;g 228 435 57 12;g 51 465 9 57;g 51 558 9 57;g 309 474 9 57;g 51 798 9 54;g 309 708 9 54;g 309 804 9 54;g 75 876 57 12;g 159 876 54 12;g 237 876 57 12;
t 66 453 21 9;t 66 465 18 12;t 94 453 33 24;t 132 450 9 21;t 144 450 9 21;m 177 453 33 18;t 159 468 12 15;t 159 486 12 15;t 159 504 12 15;t 159 522 12 18;t 177 474 33 45;q 214 468 53 53;g 228 483 21 24;m 273 477 33 18;t 277 504 24 36;t 66 486 12 24;t 78 483 12 15;t 78 501 12 12;t 66 513 21 9;t 69 525 12 9;b 99 483 51 48;o 102 531 48 3;g 114 495 21 18;
m 174 522 18 36;p 165 555;t 201 534 9 24;m 213 525 15 36;t 234 525 36 27;m 273 543 18 33;t 297 543 9 21;t 69 549 36 24;t 108 546 9 21;t 123 546 36 24;m 69 576 36 18;m 69 597 36 18;t 108 576 45 30;t 180 564 33 45;m 216 564 18 36;m 237 564 18 36;t 258 579 21 9;
t 78 615 9 21;t 66 618 12 9;t 84 636 9 12;t 96 624 9 18;t 108 627 9 21;t 66 633 9 9;b 126 618 92 92 .3;o 126 708 93 3;t 237 612 12 15;t 240 627 18 9;t 255 627 9 12;t 267 624 15 9;t 282 624 15 12;t 228 645 12 12;t 231 657 9 12;t 240 642 9 9;c 255 648 33 36;t 102 648 9 15;t 102 663 9 12;t 81 669 15 6;t 78 687 18 9;t 96 687 21 9;t 240 663 9 21;
t 66 699 9 21;t 78 696 9 15;t 90 699 9 18;t 102 693 9 18;m 69 735 18 36;m 90 735 18 36;t 114 735 24 36;t 144 723 33 45;t 180 723 9 21;t 192 723 9 21;t 213 729 24 36;t 231 702 9 18;m 243 696 36 18;m 243 717 36 18;t 282 693 21 9;t 282 708 21 9;t 282 723 21 9;t 282 735 21 9;t 243 741 9 21;t 252 741 18 9;t 258 750 15 9;t 270 747 9 15;t 240 759 21 9;t 180 747 9 21;t 192 750 9 18;t 276 759 15 9;
m 162 774 36 18;m 201 774 33 18;m 237 774 36 18;m 162 795 36 18;m 201 795 33 18;m 237 795 36 15;m 162 816 36 18;t 84 777 21 9;t 84 792 18 36;t 66 822 12 15;t 69 837 12 9;t 84 840 21 9;t 90 846 12 9;t 108 837 18 9;t 114 846 12 9;p 129 840;t 129 783 15 9;t 117 792 9 12;t 129 801 15 9;t 132 813 12 12;t 147 810 12 9;t 108 810 9 9;t 147 795 9 12;t 147 837 9 24;t 156 846 9 12;t 102 861 15 15;t 117 861 12 12;t 132 861 9 15;t 144 861 9 15;t 156 861 9 15;t 165 840 9 15;t 171 861 9 15;t 183 852 9 24;t 195 840 9 36;
c 204 816 24 40;c 231 822 21 36;t 201 861 21 12;t 225 861 18 12;t 246 861 15 12;t 201 828 9 12;t 243 819 15 15;
b 75 891 9 36;b 99 900 45 36;g 117 906 15 24;n 54 909 12 27;q 228 921 36 38;t 213 924 9 27;p 267 936;t 228 963 12 9;t 243 963 15 9;m 114 945 36 27;t 114 975 36 27;t 81 945 6 15;t 90 945 6 15;t 102 948 9 21;t 102 975 9 12;t 78 963 9 48;t 171 1002 9 15;t 180 1002 9 15`,
c: `t 78 0 15 9;t 93 0 15 9;o 43 12 275 272;g 84 15 18 12;g 165 21 24 6;g 225 15 18 12;g 294 42 18 12;g 45 48 12 18;g 48 123 9 9;g 45 186 9 12;y 48 225 9 6;g 66 261 6 12;g 84 270 21 12;g 183 270 27 6;g 246 270 18 12;g 294 255 18 12;y 180 105 9 6;y 180 120 9 6;y 180 132 6 6;y 180 150 9 6;y 180 165 9 3;y 198 171 9 3;y 180 180 9 6;y 180 195 9 3;y 180 207 9 6;g 270 150 9 6;y 270 165 9 3;y 234 165 9 3;
t 150 282 15 9;t 165 282 15 9;g 78 294 54 9;g 168 294 57 9;t 45 297 15 12;g 48 315 9 27;q 72 309 69 50;g 87 324 15 18;g 108 321 15 21;t 63 315 9 15;t 63 333 9 24;t 144 309 12 15;t 144 333 12 24;g 156 318 9 27;t 174 321 24 39;t 180 309 21 9;t 204 309 15 9;t 219 309 12 9;b 207 327 27 27;t 243 336 9 24;g 258 324 9 30;g 66 363 54 9;g 132 363 54 9;g 195 363 54 9;
o 81 381 240 215;g 117 384 24 12;g 192 390 27 6;g 225 384 24 12;g 294 408 21 15;g 81 411 15 24;g 81 516 15 24;g 87 579 21 15;g 183 579 27 6;g 255 579 21 15;g 294 567 21 12;g 219 447 12 6;y 240 462 12 6;y 219 480 12 6;y 219 504 15 9;y 240 519 12 9;y 219 534 15 6;y 240 489 12 6;
t 51 390 9 12;t 63 390 6 12;t 66 414 9 21;t 66 435 9 18;t 66 456 9 15;t 66 474 9 21;t 66 501 9 21;
c 63 618 36 40;g 66 621 6 33;g 90 621 6 33;t 123 612 15 9;t 126 627 9 24;c 141 615 24 24;t 138 645 15 9;t 153 645 15 9;t 60 681 9 12;t 69 675 9 15;t 78 675 12 9;t 81 684 18 12;t 99 675 12 15;t 66 696 15 12;t 81 699 18 9;t 102 687 12 9;t 114 681 12 12;t 69 711 21 9;t 84 711 9 9;t 102 705 9 15;t 111 702 9 18;t 129 690 15 27;t 135 663 15 9;t 153 663 9 21;t 69 729 9 12;t 87 741 9 15;t 96 741 12 12;t 102 729 9 12;t 114 729 12 9;t 114 741 9 15;t 129 723 12 12;t 135 735 18 9;t 144 720 9 15;t 132 744 15 9;t 159 735 9 24;t 174 747 9 15;t 183 753 12 9;p 177 765;j 90 783 155 32;
t 423 0 9 21;t 459 0 36 12;t 516 12 9 15;t 525 12 9 15;c 570 30 33 21;t 456 45 12 15;t 468 45 9 15;t 480 45 9 15;t 492 45 9 15;t 504 45 9 12;t 513 45 9 15;t 525 45 12 12;t 540 45 9 9;
g 417 93 54 9;g 498 93 57 9;g 579 93 54 9;g 393 120 9 57;g 393 195 9 27;g 660 117 9 57;g 660 192 9 54;g 660 267 9 54;g 441 285 9 57;g 393 360 9 30;g 657 339 9 57;g 393 438 9 27;g 393 486 9 27;g 576 441 9 27;g 576 483 9 27;g 417 537 54 9;g 495 537 57 9;g 444 411 30 9;g 492 411 54 9;
t 414 126 12 15;t 426 126 12 9;t 453 126 12 15;t 468 126 15 12;t 483 132 9 15;t 501 126 18 9;t 414 144 12 15;t 408 156 18 9;t 426 141 9 15;t 459 150 15 9;t 477 150 9 15;t 489 150 9 15;t 504 147 9 18;c 534 126 24 24;t 537 108 21 9;t 537 153 15 9;t 540 162 15 12;t 540 177 12 15;
t 408 177 9 21;t 420 165 9 15;t 405 204 12 15;t 405 222 12 15;t 420 189 12 9;t 420 201 15 9;t 420 213 15 9;t 423 225 12 21;t 405 240 12 9;b 440 170 92 80 .35;o 440 248 92 3;t 438 159 15 9;t 456 162 15 9;
q 573 117 66 80;g 591 138 27 15;g 591 162 27 15;t 558 165 12 15;t 558 183 12 15;t 540 204 15 15;t 540 222 12 15;t 540 240 15 15;t 558 207 12 21;t 558 240 12 21;c 576 202 36 32;c 579 237 33 30;t 615 204 12 21;t 627 195 12 15;t 639 120 15 15;t 642 138 12 15;t 639 156 12 15;t 642 174 12 15;t 618 228 12 15;t 633 216 15 12;q 618 243 39 30;t 630 195 9 30;
t 456 261 9 15;t 468 261 9 15;t 480 261 12 15;t 492 270 12 18;t 510 264 15 9;t 525 264 9 18;t 540 264 9 21;t 555 267 12 21;t 567 273 9 21;t 513 279 9 12;t 549 285 21 9;c 465 291 21 18;t 456 309 12 18;t 468 312 15 9;t 456 333 15 15;t 459 357 12 15;t 474 327 9 18;t 474 348 9 24;
q 489 297 108 83;g 510 315 15 48;g 534 315 18 48;g 558 315 18 48;t 603 261 9 15;t 606 279 9 21;t 615 285 9 21;t 600 303 9 24;t 612 309 12 21;t 624 276 12 21;t 636 279 12 15;t 627 300 15 15;t 630 318 18 9;c 618 333 36 33;t 606 336 9 21;t 603 360 12 15;c 609 375 18 21;t 597 384 9 15;t 633 375 18 12;t 633 390 12 12;p 642 294;p 438 357;
t 411 378 21 9;t 411 390 21 9;t 444 378 18 12;t 462 375 15 15;c 465 390 21 18;t 492 387 12 18;t 504 387 12 15;t 516 387 12 18;t 531 387 12 15;t 543 387 12 18;t 555 387 12 15;t 567 387 12 15;c 585 387 18 15;t 480 381 12 15;
t 441 423 9 18;t 453 423 9 15;t 465 423 9 15;t 477 420 9 18;t 489 423 9 15;t 501 423 12 15;t 516 420 9 18;t 528 423 9 15;t 540 420 12 18;t 555 414 9 24;t 567 414 6 21;t 411 429 15 12;t 411 444 15 9;t 411 456 15 12;t 414 474 9 21;
q 441 441 117 83;g 459 459 21 21;g 486 459 21 21;g 513 459 21 21;g 459 486 21 21;g 486 486 21 21;g 513 486 21 21;t 558 450 12 24;t 561 477 9 21;t 558 504 12 15;t 429 498 9 15;t 429 516 12 15;t 453 528 15 9;t 471 528 21 9;t 495 528 21 9;t 519 528 21 9;t 546 528 27 9;
p 600 447;p 612 447;p 609 459;p 618 459;p 627 459;b 600 480 30 36;g 606 486 18 21;o 600 513 33 3;t 627 432 15 9;t 642 432 15 9;t 645 474 9 27;t 597 525 9 21;t 609 525 12 24;t 627 522 9 15;t 579 546 15 6;
q 543 555 39 38;g 555 567 12 15;t 516 555 9 18;t 528 552 9 24;t 516 579 9 21;t 582 561 9 21;t 582 588 9 18;c 609 576 42 38;c 528 600 21 18;t 543 603 9 21;t 564 612 15 30;t 567 645 12 21;t 549 648 9 48;t 579 651 9 15;t 459 570 45 26;t 591 678 15 9;t 606 678 15 9;t 624 678 12 9;t 552 741 9 15;t 561 732 9 15;t 576 723 15 6;t 576 747 9 21;t 591 756 21 15;t 612 756 21 9;t 600 771 15 9;t 567 759 9 15;t 585 771 15 9;
t 510 774 9 24;t 525 774 9 24;t 513 801 12 9;t 525 801 12 15;q 549 780 30 30;t 576 783 12 9;t 576 798 12 9;t 618 777 9 18;t 618 798 9 18;t 546 765 12 12;
t 402 816 39 17;t 402 861 39 14;t 456 807 9 21;t 462 798 15 6;t 450 837 21 9;t 450 852 9 21;t 477 1056 21 9;t 498 1056 21 9;t 480 1073 36 15`
};

const place = { a: '760 140', b: '975 140', c: '860 470' };
const tilted = '<g transform="rotate(-35 427 588)">' + draw.t(405, 574, 19, 28) + draw.t(427, 574, 19, 28) + '</g>';
let out = '';
for (const key of ['a', 'b', 'c']) {
  out += `<g transform="translate(${place[key]}) scale(.33333333)">`;
  out += outlines[key].map(d => `<path d="${d}" fill="${GREEN}" stroke="#5fa27f" stroke-width="2"/>`).join('');
  out += '</g>';
}
for (const key of ['a', 'b', 'c']) {
  out += `<g shape-rendering="crispEdges" transform="translate(${place[key]}) scale(.33333333)">`;
  out += parts[key].split(';').map(row => {
    const [kind, ...n] = row.trim().split(/\s+/);
    return draw[kind](...n.map(Number));
  }).join('');
  out += (key === 'c' ? tilted : '') + '</g>';
}
const label = (x, y, size, text, turn = 0) => `<text class="ref ref-${size}" x="${x}" y="${y}" transform="rotate(${turn} ${x} ${y})">${text}</text>`;
out += label(920, 525, 16, 'SIM600') + label(925, 636, 12, 'SIM601') + label(1041, 585, 8, 'F1002') + label(916, 346, 8, 'UME400') + label(924, 420, 12, 'UCP300', -90) + label(1031, 364, 8, 'U300');
for (const x of [703, 1153]) for (const y of [268, 668]) out += `<text class="mark" x="${x}" y="${y + 6}" transform="rotate(-45 ${x} ${y})">XZZ@XZZHK</text>`;
document.getElementById('board').innerHTML = out;
```
